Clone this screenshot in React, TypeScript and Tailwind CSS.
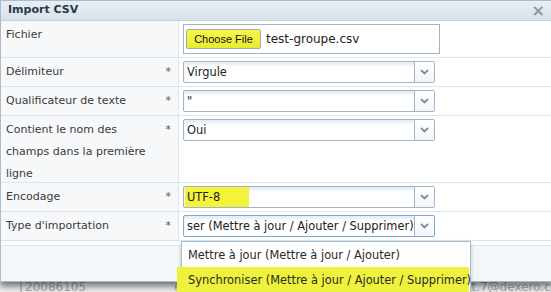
import React from "react";

const Chevron = () => (
  <svg width="9" height="6" viewBox="0 0 9 6">
    <path d="M1 1 L4.5 4.5 L8 1" fill="none" stroke="#7d8d9c" strokeWidth="1.8" />
  </svg>
);

function Select({ value, focused, marked }: { value: string; focused?: boolean; marked?: boolean }) {
  return (
    <div
      className={`flex h-[22px] w-[252px] rounded-[2px] border bg-white shadow-[inset_0_3px_3px_rgba(180,200,220,0.35)] ${
        focused ? "border-[#7fa7d6]" : "border-[#9fb4c7]"
      }`}
    >
      <div className="flex-1 overflow-hidden whitespace-nowrap pl-[1px] text-[11.4px] leading-[20px] text-[#222]">
        <span className={marked ? "inline-block w-[64px] bg-[#f3f33a] pl-[2px]" : "pl-[2px]"}>{value}</span>
      </div>
      <div className="flex w-[20px] items-center justify-center border-l border-[#9fb4c7] bg-gradient-to-b from-white to-[#f1f5f8]">
        <Chevron />
      </div>
    </div>
  );
}

function Row({ label, required, h, children }: { label: React.ReactNode; required?: boolean; h: string; children: React.ReactNode }) {
  return (
    <div className={`flex border-b border-[#dbe5eb] ${h}`}>
      <div className="flex w-[178px] shrink-0 justify-between border-r border-[#dbe5eb] bg-[#f6f8fa] pl-[5px] pr-[7px] pt-[3px] text-[11px] leading-[22px] text-[#3a3a3a]">
        <div>{label}</div>
        {required && <span className="text-[#555]">*</span>}
      </div>
      <div className="pl-[4px] pt-[3px]">{children}</div>
    </div>
  );
}

export default function App() {
  return (
    <div className="relative h-[292px] w-[551px] overflow-hidden bg-[#eceeef] font-['DejaVu_Sans',sans-serif]">
      {/* page behind the dialog */}
      <div className="flex pt-[280px] text-[12px] leading-[14px] text-[#a8a8a8]">
        <span className="ml-[20px] mt-[2px] h-[10px] w-[10px] border border-[#c0c0c0]" />
        <span className="ml-[3px]">20086105</span>
        <span className="ml-[88px]">e</span>
        <span className="ml-[290px]">t.7@dexero.com</span>
      </div>

      {/* dialog */}
      <div className="absolute left-0 top-0 w-[553px] border border-[#a9bccd] bg-white shadow-[0_4px_7px_rgba(0,0,0,0.55)]">
        <div className="flex h-[20px] items-center justify-between border-b border-[#c3d2de] bg-gradient-to-b from-[#e8eef3] to-[#d8e2ea] pl-[7px] pr-[7px]">
          <span className="text-[11px] font-bold text-[#26384a]">Import CSV</span>
          <span className="text-[16px] font-bold leading-[16px] text-[#8797a6]">×</span>
        </div>

        <Row label="Fichier" h="h-[37px]">
          <div className="flex h-[30px] w-[257px] items-center border border-[#9fb4c7] bg-white pl-[2px]">
            <div className="flex h-[20px] w-[75px] items-center justify-center rounded-[2px] border border-[#a9a9a9] bg-gradient-to-b from-[#f5f74a] to-[#e9ec2c] font-['Liberation_Sans',sans-serif] text-[11px] text-[#111]">
              Choose File
            </div>
            <span className="ml-[5px] text-[12px] text-[#222]">test-groupe.csv</span>
          </div>
        </Row>
        <Row label="Délimiteur" required h="h-[29px]">
          <Select value="Virgule" />
        </Row>
        <Row label="Qualificateur de texte" required h="h-[29px]">
          <Select value={'"'} />
        </Row>
        <Row
          label={
            <>
              Contient le nom des
              <br />
              champs dans la première
              <br />
              ligne
            </>
          }
          required
          h="h-[67px]"
        >
          <Select value="Oui" />
        </Row>
        <Row label="Encodage" required h="h-[29px]">
          <Select value="UTF-8" marked />
        </Row>
        <Row label="Type d'importation" required h="h-[29px]">
          <Select value="ser (Mettre à jour / Ajouter / Supprimer)" focused />
        </Row>

        <div className="mt-[4px] h-[36px] border-t border-[#dbe5eb] bg-[#f4f7f9]" />
      </div>

      {/* open list of the select */}
      <div className="absolute left-[181px] top-[241px] w-[290px] border border-[#a6bccf] bg-white text-[11.4px] text-[#2a2a2a] shadow-[0_2px_4px_rgba(0,0,0,0.2)]">
        <div className="h-[25px] whitespace-nowrap pl-[6px] leading-[26px]">Mettre à jour (Mettre à jour / Ajouter)</div>
        <div className="-ml-[5px] h-[26px] w-[292px] whitespace-nowrap bg-[#eef23c] pl-[11px] leading-[26px]">
          Synchroniser (Mettre à jour / Ajouter / Supprimer)
        </div>
      </div>
    </div>
  );
}
